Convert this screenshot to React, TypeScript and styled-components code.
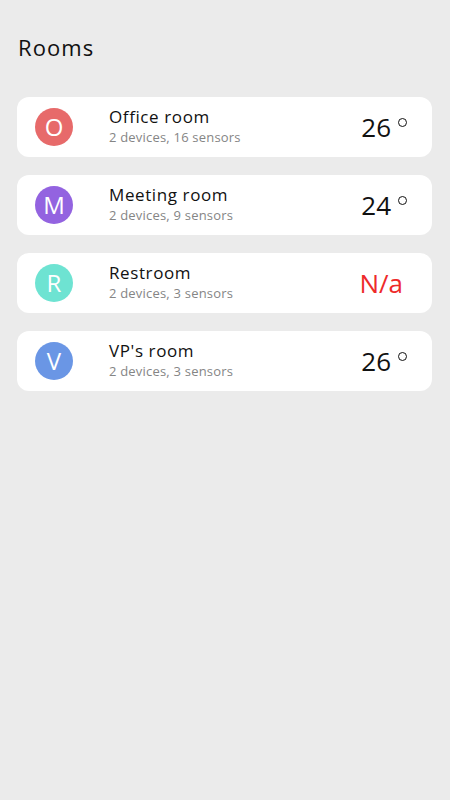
import React, { FC } from 'react';
import styled, { createGlobalStyle } from 'styled-components';

const GlobalStyle = createGlobalStyle`
    html, body {
        margin: 0;
        padding: 0;
        background: #ebebeb;
        font-family: 'Open Sans', 'Liberation Sans', sans-serif;
    }
`;

const Page = styled.main`
    min-height: 800px;
    box-sizing: border-box;
    padding: 32px 18px 0 17px;
`;

const Title = styled.h1`
    margin: 0 0 35px 1px;
    font-size: 22px;
    font-weight: 400;
    line-height: 30px;
    letter-spacing: 1.1px;
    color: #111;
`;

const List = styled.ul`
    list-style: none;
    margin: 0;
    padding: 0;
    display: flex;
    flex-direction: column;
    gap: 18px;
`;

const Card = styled.li`
    display: grid;
    grid-template-columns: 38px 1fr auto;
    align-items: center;
    column-gap: 36px;
    height: 60px;
    box-sizing: border-box;
    padding: 0 25px 0 18px;
    background: #fff;
    border-radius: 12px;
`;

const Avatar = styled.div<{ $color: string }>`
    width: 38px;
    height: 38px;
    border-radius: 50%;
    background: ${(p) => p.$color};
    color: #fff;
    font-size: 24px;
    line-height: 38px;
    text-align: center;
`;

const Info = styled.div`
    display: flex;
    flex-direction: column;
    margin-top: -1px;
`;

const Name = styled.span`
    font-size: 17px;
    line-height: 21px;
    color: #111;
    letter-spacing: 0.6px;
`;

const Meta = styled.span`
    font-size: 13px;
    line-height: 20px;
    color: #858585;
    letter-spacing: 0.2px;
`;

const Temp = styled.div<{ $missing?: boolean }>`
    font-size: 26px;
    line-height: 32px;
    color: ${(p) => (p.$missing ? '#ee2a2a' : '#111')};
    display: flex;
    align-items: flex-start;
    margin-right: ${(p) => (p.$missing ? '4px' : '0')};
`;

const Degree = styled.span`
    display: inline-block;
    width: 7px;
    height: 7px;
    border: 1.6px solid #111;
    border-radius: 50%;
    margin: 7px 0 0 7px;
`;

type Room = {
    letter: string;
    color: string;
    name: string;
    devices: number;
    sensors: number;
    temp: number | null;
};

const rooms: Room[] = [
    { letter: 'O', color: '#e76a6a', name: 'Office room', devices: 2, sensors: 16, temp: 26 },
    { letter: 'M', color: '#9363e0', name: 'Meeting room', devices: 2, sensors: 9, temp: 24 },
    { letter: 'R', color: '#6ee3d2', name: 'Restroom', devices: 2, sensors: 3, temp: null },
    { letter: 'V', color: '#6a96e5', name: "VP's room", devices: 2, sensors: 3, temp: 26 },
];

const App: FC = () => (
    <Page>
        <GlobalStyle />
        <Title>Rooms</Title>
        <List>
            {rooms.map((room) => (
                <Card key={room.name}>
                    <Avatar $color={room.color}>{room.letter}</Avatar>
                    <Info>
                        <Name>{room.name}</Name>
                        <Meta>
                            {room.devices} devices, {room.sensors} sensors
                        </Meta>
                    </Info>
                    {room.temp === null ? (
                        <Temp $missing>N/a</Temp>
                    ) : (
                        <Temp>
                            {room.temp}
                            <Degree />
                        </Temp>
                    )}
                </Card>
            ))}
        </List>
    </Page>
);

export default App;
